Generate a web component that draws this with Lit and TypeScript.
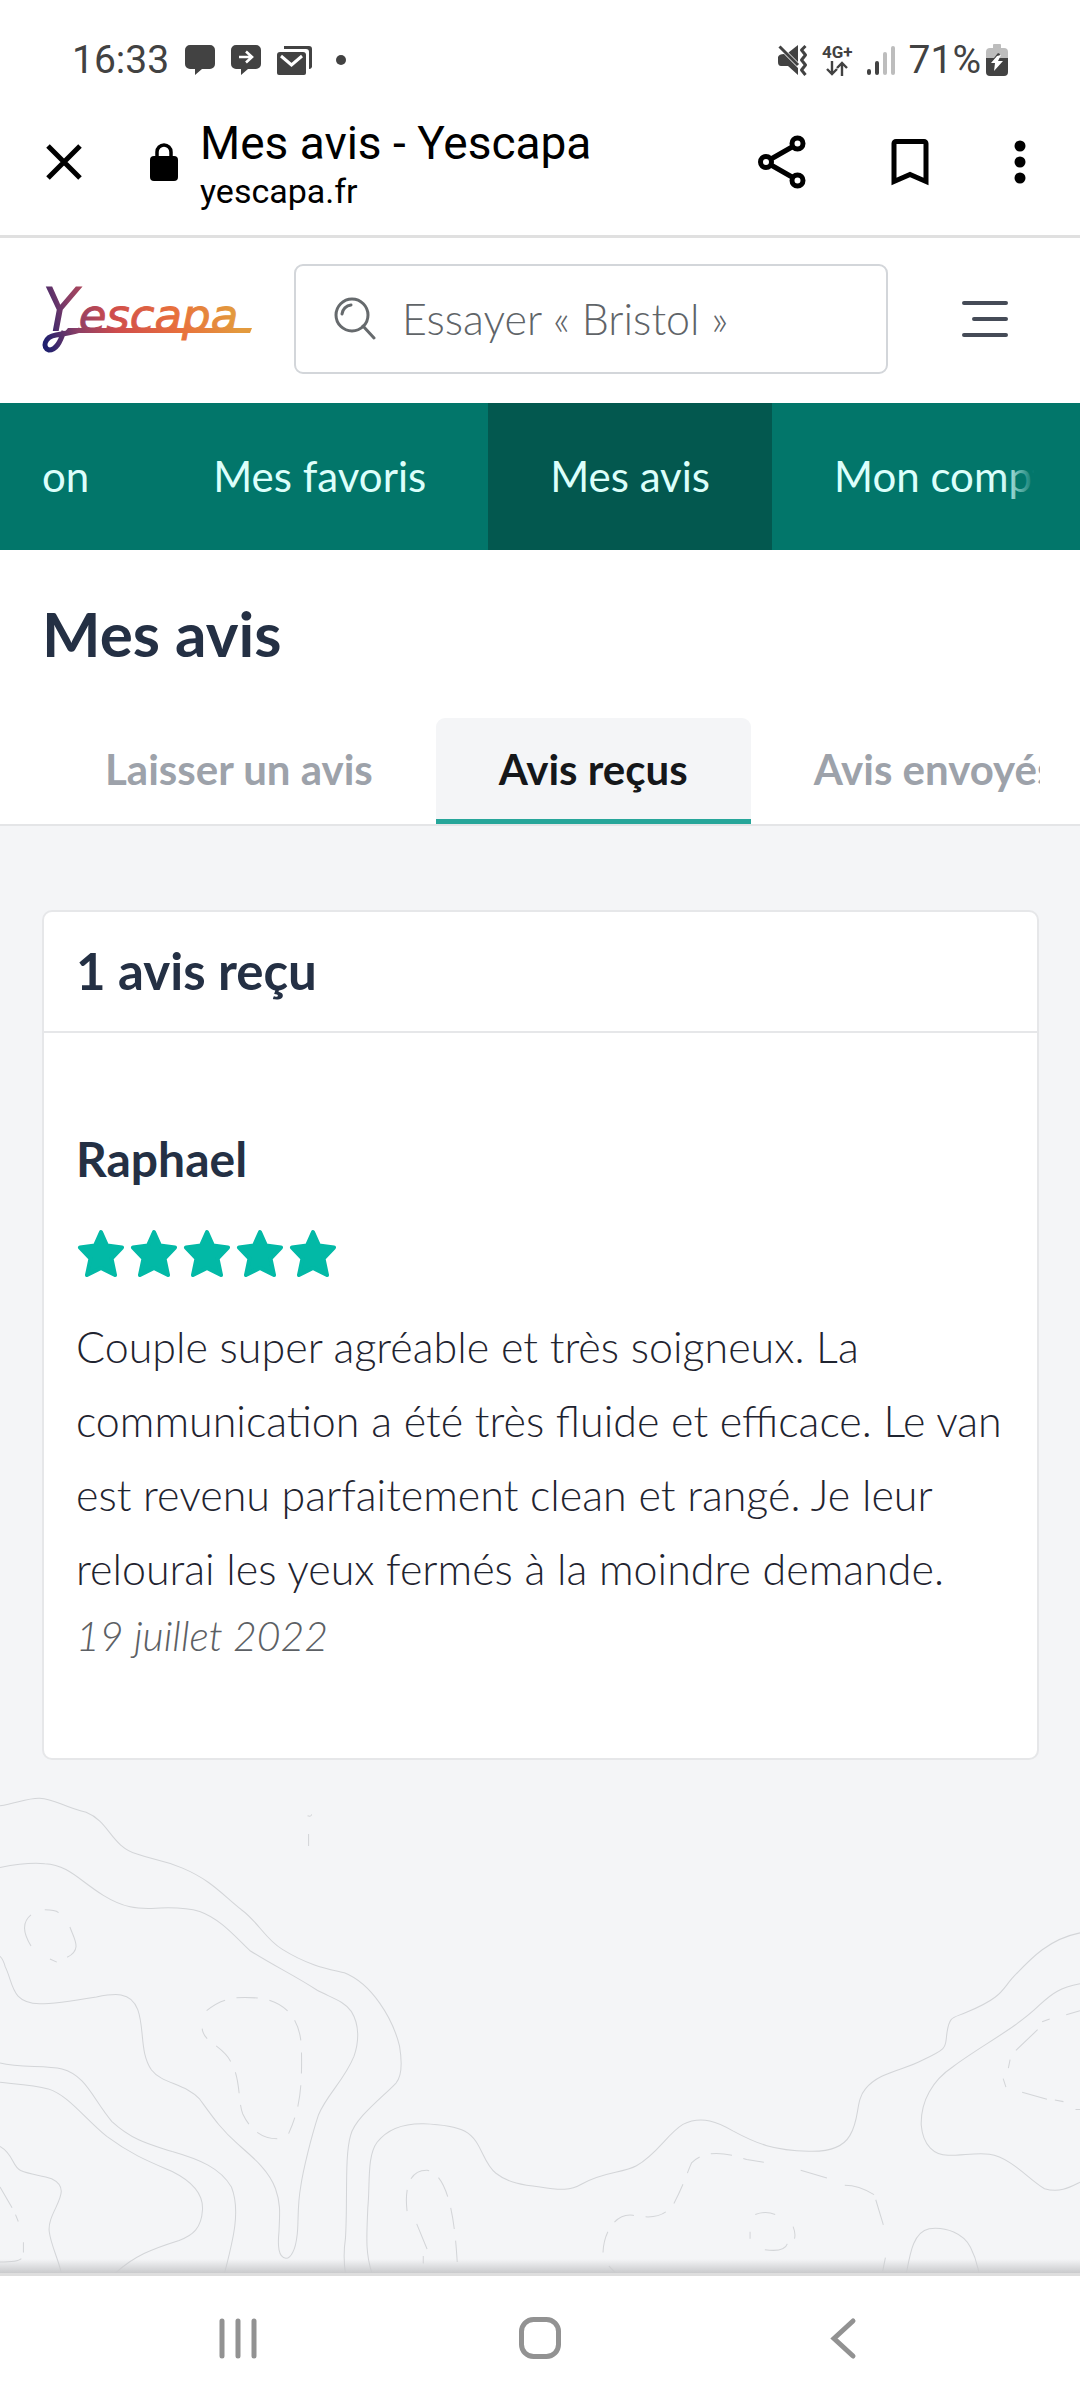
import { LitElement, html, css, svg } from "lit";
import { customElement } from "lit/decorators.js";
import { classMap } from "lit/directives/class-map.js";

const controls = css`
  button {
    border: 0;
    padding: 0;
    background: none;
    font: inherit;
    color: inherit;
    cursor: pointer;
  }
  svg {
    display: block;
    flex: none;
  }
  a {
    color: inherit;
    text-decoration: none;
  }
`;

@customElement("status-bar")
class StatusBar extends LitElement {
  static styles = [
    controls,
    css`
      :host {
        display: block;
        font-family: Roboto, sans-serif;
        color: #424242;
      }
      .bar {
        display: flex;
        align-items: center;
        justify-content: space-between;
        padding: 38px 72px 8px 72px;
        font-size: 39px;
        line-height: 44px;
      }
      .group {
        display: flex;
        align-items: center;
      }
      .left {
        gap: 16px;
      }
      .right {
        gap: 14px;
      }
      .network {
        display: flex;
        flex-direction: column;
        align-items: center;
        font-size: 17px;
        line-height: 17px;
        font-weight: 700;
      }
      .battery {
        display: flex;
        align-items: center;
        gap: 5px;
      }
      .dot {
        margin-left: 6px;
      }
    `,
  ];

  render() {
    return html`
      <div class="bar">
        <div class="group left">
          <span>16:33</span>
          <svg width="30" height="32" viewBox="0 0 30 32" fill="#424242" aria-hidden="true">
            <path d="M5 1h20a5 5 0 0 1 5 5v14a5 5 0 0 1-5 5h-8l-7 6v-6H5a5 5 0 0 1-5-5V6a5 5 0 0 1 5-5z" />
          </svg>
          <svg width="30" height="32" viewBox="0 0 30 32" fill="#424242" aria-hidden="true">
            <path d="M5 1h20a5 5 0 0 1 5 5v14a5 5 0 0 1-5 5h-8l-7 6v-6H5a5 5 0 0 1-5-5V6a5 5 0 0 1 5-5z" />
            <path d="M8 13h12M15 7.500l6 5.500-6 5.500" fill="none" stroke="#fff" stroke-width="2.600" />
          </svg>
          <svg width="36" height="32" viewBox="0 0 36 32" fill="#424242" aria-hidden="true">
            <path d="M7 2h25a3 3 0 0 1 3 3v18a3 3 0 0 1-3 2V8a3 3 0 0 0-3-3H7z" />
            <path d="M3 8h23a3 3 0 0 1 3 3v18a2 2 0 0 1-2 2H2a2 2 0 0 1-2-2V11a3 3 0 0 1 3-3z" />
            <path d="M4 12l10.500 9L25 12" fill="none" stroke="#fff" stroke-width="3" />
          </svg>
          <svg class="dot" width="12" height="12" viewBox="0 0 12 12" aria-hidden="true">
            <circle cx="6" cy="6" r="5" fill="#424242" />
          </svg>
        </div>
        <div class="group right">
          <svg width="31" height="32" viewBox="0 0 31 32" fill="#424242" aria-hidden="true">
            <path d="M1 13q1-3 6-3l14 14v7l-10-9H4q-3 0-3-4z" />
            <path d="M21 1v17L11.500 8.500z" />
            <path d="M2.500 2.500L21 21" stroke="#424242" stroke-width="3" />
            <path
              d="M28.500 2l-4 4 4 5-4 5 4 5-4 5 4 5"
              fill="none"
              stroke="#424242"
              stroke-width="3"
              stroke-linejoin="round"
            />
          </svg>
          <span class="network">
            4G+
            <svg width="24" height="15" viewBox="0 0 24 15" aria-hidden="true">
              <path
                d="M7 0v13M2 8l5 5 5-5M17 15V2M12 7l5-5 5 5"
                fill="none"
                stroke="#424242"
                stroke-width="2.400"
              />
            </svg>
          </span>
          <svg width="28" height="32" viewBox="0 0 28 32" aria-hidden="true">
            <g stroke-width="4" stroke-linecap="round">
              <path d="M2 27v2M10 19v10" stroke="#424242" />
              <path d="M18 10v19M26 4v25" stroke="#bdbdbd" />
            </g>
          </svg>
          <span class="battery">
            71%
            <svg width="22" height="34" viewBox="0 0 22 34" aria-hidden="true">
              <path
                d="M7 2a1 1 0 0 1 1-1h6a1 1 0 0 1 1 1v3h3a4 4 0 0 1 4 4v8H0V9a4 4 0 0 1 4-4h3z"
                fill="#bdbdbd"
              />
              <path d="M0 15h22v14a4 4 0 0 1-4 4H4a4 4 0 0 1-4-4z" fill="#424242" />
              <path d="M8 15l4-5 2 1-1 4z" fill="#424242" />
              <path d="M11 13L5 20h4L8 28l9-10h-5l3-6z" fill="#fff" />
            </svg>
          </span>
        </div>
      </div>
    `;
  }
}

@customElement("browser-bar")
class BrowserBar extends LitElement {
  static styles = [
    controls,
    css`
      :host {
        display: block;
        font-family: Roboto, sans-serif;
        color: #000;
      }
      .bar {
        display: flex;
        align-items: center;
        padding: 22px 54px 23px 46px;
        border-bottom: 3px solid #e0e0e0;
      }
      .lock {
        margin: 0 22px 0 68px;
      }
      .page {
        flex: 1;
        min-width: 0;
        padding-top: 4px;
      }
      .title {
        font-size: 46px;
        line-height: 54px;
      }
      .url {
        font-size: 34px;
        line-height: 42px;
      }
      .actions {
        display: flex;
        align-items: center;
        gap: 85px;
      }
    `,
  ];

  render() {
    return html`
      <div class="bar">
        <button aria-label="Fermer">
          <svg width="36" height="36" viewBox="0 0 36 36">
            <path d="M2 2l32 32M34 2L2 34" stroke="#000" stroke-width="5" />
          </svg>
        </button>
        <svg class="lock" width="28" height="38" viewBox="0 0 28 38" aria-hidden="true">
          <rect y="13" width="28" height="25" rx="4" />
          <path d="M7 14V9a7 7 0 0 1 14 0v5" fill="none" stroke="#000" stroke-width="3.500" />
        </svg>
        <div class="page">
          <div class="title">Mes avis - Yescapa</div>
          <div class="url">yescapa.fr</div>
        </div>
        <div class="actions">
          <button aria-label="Partager">
            <svg width="48" height="54" viewBox="0 0 48 54" fill="none" stroke="#000" stroke-width="5">
              <path d="M13 24l21-12M13 30l21 12" />
              <circle cx="8" cy="27" r="5.500" />
              <circle cx="39.500" cy="8.500" r="5.500" />
              <circle cx="39.500" cy="45.500" r="5.500" />
            </svg>
          </button>
          <button aria-label="Ajouter aux favoris">
            <svg width="38" height="48" viewBox="0 0 38 48" fill="none" stroke="#000" stroke-width="5">
              <path d="M3 43.500V5.500a2 2 0 0 1 2-2h28a2 2 0 0 1 2 2v38L19 36.500z" />
            </svg>
          </button>
          <button aria-label="Menu du navigateur">
            <svg width="12" height="48" viewBox="0 0 12 48">
              <circle cx="6" cy="8" r="5.500" />
              <circle cx="6" cy="24" r="5.500" />
              <circle cx="6" cy="40" r="5.500" />
            </svg>
          </button>
        </div>
      </div>
    `;
  }
}

@customElement("site-header")
class SiteHeader extends LitElement {
  static styles = [
    controls,
    css`
      :host {
        display: block;
      }
      .head {
        display: flex;
        align-items: center;
        padding: 26px 70px 29px 40px;
      }
      .search {
        display: flex;
        flex: 1;
        align-items: center;
        gap: 26px;
        min-width: 0;
        margin: 0 72px 0 40px;
        padding: 0 38px;
        border: 2px solid #d3d6da;
        border-radius: 9px;
      }
      .field {
        flex: 1;
        min-width: 0;
        padding: 0;
        border: 0;
        outline: 0;
        background: none;
        font: 300 43px / 106px Lato, sans-serif;
        height: 106px;
        color: #4b5563;
      }
      .field::placeholder {
        color: #606468;
        opacity: 1;
      }
    `,
  ];

  render() {
    return html`
      <header class="head">
        <a href="/" aria-label="Yescapa">
          <svg width="214" height="104" viewBox="0 -10 214 104">
            <defs>
              <linearGradient id="brand" gradientUnits="userSpaceOnUse" x1="8" y1="74" x2="190" y2="20">
                <stop offset="0" stop-color="#20206e" />
                <stop offset="0.180" stop-color="#8c3f66" />
                <stop offset="0.380" stop-color="#cf4c4c" />
                <stop offset="0.700" stop-color="#e8703c" />
                <stop offset="1" stop-color="#e39a3d" />
              </linearGradient>
            </defs>
            <text
              x="2"
              y="54"
              fill="url(#brand)"
              font-family="DejaVu Sans, sans-serif"
              font-style="italic"
              font-size="60"
            ><tspan>Y</tspan><tspan font-size="45" font-weight="700" font-family="Lato, sans-serif"></tspan><tspan font-size="45" stroke="url(#brand)" stroke-width="1">escapa</tspan></text>
            <path d="M28 51H212L210 56H24z" fill="url(#brand)" />
            <path
              d="M24 54C20 66 16 73 9 73C2 71 4 60 16 58Q30 56 40 53"
              fill="none"
              stroke="url(#brand)"
              stroke-width="5"
            />
          </svg>
        </a>
        <label class="search">
          <svg width="42" height="44" viewBox="0 0 42 44" fill="none" stroke="#666a6d" stroke-width="3" aria-hidden="true">
            <circle cx="18" cy="18" r="16" />
            <path d="M8 17a10 10 0 0 1 9-9M29 29l11 12" stroke-linecap="round" />
          </svg>
          <input class="field" type="search" aria-label="Rechercher" placeholder="Essayer « Bristol »" />
        </label>
        <button aria-label="Menu">
          <svg width="50" height="40" viewBox="0 0 50 40" stroke="#454b57" stroke-width="4" stroke-linecap="round">
            <path d="M4 4H46M14 20H46M4 36H46" />
          </svg>
        </button>
      </header>
    `;
  }
}

@customElement("account-nav")
class AccountNav extends LitElement {
  static styles = [
    controls,
    css`
      :host {
        display: block;
        background: #02766a;
        color: #dcfffb;
      }
      .nav {
        position: relative;
        display: flex;
        margin: 0 42px;
        overflow: hidden;
      }
      .nav::after {
        content: "";
        position: absolute;
        inset: 0 0 0 auto;
        width: 36px;
        background: linear-gradient(to right, transparent, #02766a 90%);
      }
      .item {
        flex: none;
        padding: 46px 62px 47px;
        font-size: 42px;
        line-height: 54px;
        white-space: nowrap;
      }
      .item:first-child {
        padding-left: 0;
      }
      .active {
        background: #03584f;
      }
    `,
  ];

  private items = ["on", "Mes favoris", "Mes avis", "Mon compte"];

  render() {
    return html`
      <nav class="nav" aria-label="Mon espace">
        ${this.items.map(
          (item, i) => html`<a class=${classMap({ item: true, active: i === 2 })} href="#">${item}</a>`
        )}
      </nav>
    `;
  }
}

@customElement("review-tabs")
class ReviewTabs extends LitElement {
  static styles = [
    controls,
    css`
      :host {
        display: block;
        border-bottom: 2px solid #e4e5e7;
      }
      .heading {
        margin: 0;
        padding: 44px 42px 46px;
        font-size: 62px;
        line-height: 78px;
        font-weight: 700;
        color: #243044;
      }
      .tabs {
        display: flex;
        margin: 0 40px 0 42px;
        overflow: hidden;
      }
      .tab {
        flex: none;
        padding: 26px 63px 24px;
        border-bottom: 5px solid transparent;
        font-size: 42px;
        line-height: 51px;
        font-weight: 700;
        color: #9da2aa;
        white-space: nowrap;
      }
      .selected {
        border-radius: 9px 9px 0 0;
        border-bottom-color: #26a69a;
        background: #f4f5f7;
        color: #15171a;
      }
    `,
  ];

  private tabs = ["Laisser un avis", "Avis reçus", "Avis envoyés"];

  render() {
    return html`
      <h1 class="heading">Mes avis</h1>
      <div class="tabs" role="tablist">
        ${this.tabs.map(
          (tab, i) => html`<button
            class=${classMap({ tab: true, selected: i === 1 })}
            role="tab"
            aria-selected=${i === 1 ? "true" : "false"}
          >
            ${tab}
          </button>`
        )}
      </div>
    `;
  }
}

@customElement("review-card")
class ReviewCard extends LitElement {
  static styles = [
    controls,
    css`
      :host {
        display: block;
      }
      .card {
        border: 2px solid #e6e7e9;
        border-radius: 10px;
        background: #fff;
        color: #243044;
      }
      .count {
        margin: 0;
        padding: 29px 32px 30px;
        border-bottom: 2px solid #e6e7e9;
        font-size: 51px;
        line-height: 60px;
        font-weight: 700;
      }
      .review {
        padding: 98px 32px 92px;
      }
      .author {
        margin: 0;
        font-size: 48px;
        line-height: 56px;
        font-weight: 700;
      }
      .stars {
        display: flex;
        gap: 5px;
        margin: 41px 0 32px 1px;
      }
      .text {
        margin: 0;
        font-size: 43px;
        line-height: 74px;
        font-weight: 300;
        color: #1f2430;
      }
      .date {
        display: block;
        font-size: 41px;
        line-height: 60px;
        font-style: italic;
        font-weight: 300;
        color: #5c6064;
      }
    `,
  ];

  render() {
    return html`
      <section class="card">
        <h2 class="count">1 avis reçu</h2>
        <article class="review">
          <h3 class="author">Raphael</h3>
          <div class="stars" role="img" aria-label="5 sur 5">
            ${[1, 2, 3, 4, 5].map(
              () => html`<svg width="48" height="50" viewBox="0 0 48 50">
                <path
                  d="M24 4L30 17.500L45 19.500L34.500 30.500L38 47L24 40L10 47L13.500 30.500L3 19.500L18 17.500Z"
                  fill="#02b9a6"
                  stroke="#02b9a6"
                  stroke-width="4"
                  stroke-linejoin="round"
                />
              </svg>`
            )}
          </div>
          <p class="text">
            Couple super agréable et très soigneux. La communication a été très fluide et efficace. Le van est
            revenu parfaitement clean et rangé. Je leur relourai les yeux fermés à la moindre demande.
          </p>
          <time class="date" datetime="2022-07-19">19 juillet 2022</time>
        </article>
      </section>
    `;
  }
}

const contourLines = [
  "M0 133C50 125 80 110 115 111C160 113 180 135 250 152C320 180 320 250 400 274C450 292 470 288 530 314C610 348 640 385 700 434C750 470 770 520 820 550C900 600 960 608 1000 618C1080 650 1140 750 1160 830C1170 890 1165 920 1150 938C1110 980 1030 1040 1018 1090C1000 1150 1010 1280 1003 1390C997 1430 1000 1470 1003 1490",
  "M0 312C60 300 100 298 130 301C200 305 230 350 300 393C360 430 400 432 440 431C500 427 540 428 580 440C640 462 680 510 725 553C790 595 860 628 920 668C960 690 1000 700 1020 730C1045 770 1042 820 1028 860C1000 930 950 970 925 1030C905 1090 880 1190 873 1240C862 1300 868 1350 862 1385C858 1420 845 1448 830 1447C808 1445 806 1410 810 1370C812 1320 816 1290 800 1245C780 1190 730 1150 690 1115C640 1070 620 1040 580 985C540 940 470 940 440 900C405 850 420 780 400 725C380 670 330 678 280 688C220 698 160 708 115 708C30 705 40 650 15 600Q10 580 0 570",
  "M0 880C60 895 130 885 180 897C250 915 270 985 325 1050C390 1110 450 1120 500 1137C580 1160 640 1185 672 1240C700 1310 675 1400 652 1490",
  "M0 936C60 942 100 944 140 955C200 975 240 1035 310 1093C380 1145 430 1165 500 1195C560 1225 590 1260 588 1305C585 1360 560 1380 520 1395C440 1420 390 1440 335 1490",
  "M0 1122C40 1145 35 1180 60 1192C90 1205 120 1205 150 1216C220 1250 135 1310 143 1370C148 1410 170 1450 178 1490",
  "M1080 1490C1060 1430 1065 1380 1068 1300C1075 1230 1065 1150 1095 1110C1130 1065 1180 1055 1230 1056C1280 1058 1320 1062 1350 1078C1400 1105 1400 1170 1440 1200C1475 1228 1520 1235 1568 1240",
  "M90 450C65 470 65 500 90 540M130 435q30 0 40 8M203 485C215 520 240 550 195 573M145 578l20 9",
  "M0 1240L35 1300M45 1320l8 20M68 1400v30M0 1458C30 1458 55 1455 62 1448M893 162q10 4 12-4M896 215v35",
  "M1210 1347L1240 1420M1229 1440v22",
];

const contourLinesEast = [
  "M0 1240C60 1250 90 1250 120 1232C180 1195 240 1200 280 1178C340 1145 370 1085 415 1058C470 1030 520 1053 560 1077C630 1115 680 1134 780 1136C840 1138 880 1125 900 1090C930 1040 915 990 945 955C985 905 1060 900 1110 872C1190 835 1175 835 1182 790C1190 740 1200 750 1240 732C1340 690 1340 670 1370 635C1430 570 1480 520 1568 502",
  "M1568 650C1510 662 1490 675 1450 712C1380 780 1280 830 1200 890C1140 930 1105 990 1107 1060C1112 1120 1145 1148 1185 1148C1230 1148 1270 1140 1305 1145C1370 1155 1420 1220 1465 1245C1510 1258 1540 1240 1568 1226",
  "M1064 1490C1075 1430 1085 1370 1130 1361C1180 1355 1230 1375 1250 1415C1268 1450 1270 1470 1275 1490",
  "M757 1191L833 1214M885 1235C920 1235 950 1250 970 1262M975 1277L997 1350M1003 1445L995 1485M200 1470l18 18",
  "M625 1320q30-12 58 0M735 1355q8 20 4 35M718 1405q-8 25-65 17M610 1370v20",
  "M1568 728l-40 12M1480 752l-22 8M1445 783L1382 843M1365 870l-5 25M1345 925l8 25M1400 965L1472 985M1495 987l25 5M1555 1015h13",
];

const dashedLines = [
  "M600 728C650 685 700 687 760 692C830 705 870 750 875 830C878 950 872 1010 838 1085",
  "M805 1100C750 1100 720 1060 705 1028C690 990 700 930 672 880C650 830 590 820 587 780",
  "M1182 1310C1175 1250 1185 1190 1240 1191C1290 1200 1315 1290 1325 1420L1330 1490",
  "M1751 1430C1753 1370 1788 1315 1838 1322C1908 1335 1928 1320 1953 1295C1988 1230 1998 1190 2008 1170C2048 1130 2108 1140 2168 1160L2218 1168",
];

@customElement("contour-map")
class ContourMap extends LitElement {
  static styles = css`
    :host {
      display: block;
    }
    .map {
      display: block;
      width: 100%;
      fill: none;
      stroke: #d3d5d8;
      stroke-width: 3;
    }
    .dashed {
      stroke-dasharray: 62 34;
    }
  `;

  render() {
    return html`
      <svg class="map" viewBox="0 0 3136 1490" aria-hidden="true">
        ${contourLines.map((d) => svg`<path d=${d} />`)}
        <g transform="translate(1568 0)">${contourLinesEast.map((d) => svg`<path d=${d} />`)}</g>
        <g class="dashed">${dashedLines.map((d) => svg`<path d=${d} />`)}</g>
      </svg>
    `;
  }
}

@customElement("system-nav")
class SystemNav extends LitElement {
  static styles = [
    controls,
    css`
      :host {
        display: block;
        border-top: 3px solid #dedede;
        background: #fff;
      }
      .nav {
        display: flex;
        justify-content: center;
        gap: 254px;
        padding: 38px 0;
      }
    `,
  ];

  render() {
    return html`
      <nav class="nav" aria-label="Système">
        <button aria-label="Applications récentes">
          <svg width="48" height="48" viewBox="0 0 48 48" stroke="#929292" stroke-width="5" stroke-linecap="round">
            <path d="M8 7v35M24 7v35M40 7v35" />
          </svg>
        </button>
        <button aria-label="Accueil">
          <svg width="48" height="48" viewBox="0 0 48 48" fill="none" stroke="#929292" stroke-width="5">
            <rect x="5.500" y="5.500" width="37" height="37" rx="12" />
          </svg>
        </button>
        <button aria-label="Retour">
          <svg
            width="48"
            height="48"
            viewBox="0 0 48 48"
            fill="none"
            stroke="#929292"
            stroke-width="5"
            stroke-linecap="round"
          >
            <path d="M35 7L16 24.500L35 42" />
          </svg>
        </button>
      </nav>
    `;
  }
}

@customElement("app-root")
class AppRoot extends LitElement {
  static styles = css`
    :host {
      display: flex;
      flex-direction: column;
      min-height: 100vh;
      background: #fff;
      font-family: Lato, sans-serif;
    }
    .content {
      position: relative;
      display: flex;
      flex: 1;
      flex-direction: column;
      justify-content: space-between;
      background: #f4f5f7;
    }
    .content::after {
      content: "";
      position: absolute;
      inset: auto 0 0;
      height: 14px;
      background: linear-gradient(to bottom, transparent, #c9cacc);
    }
    .card {
      margin: 84px 41px 0 42px;
    }
  `;

  render() {
    return html`
      <status-bar></status-bar>
      <browser-bar></browser-bar>
      <site-header></site-header>
      <account-nav></account-nav>
      <review-tabs></review-tabs>
      <main class="content">
        <review-card class="card"></review-card>
        <contour-map></contour-map>
      </main>
      <system-nav></system-nav>
    `;
  }
}
